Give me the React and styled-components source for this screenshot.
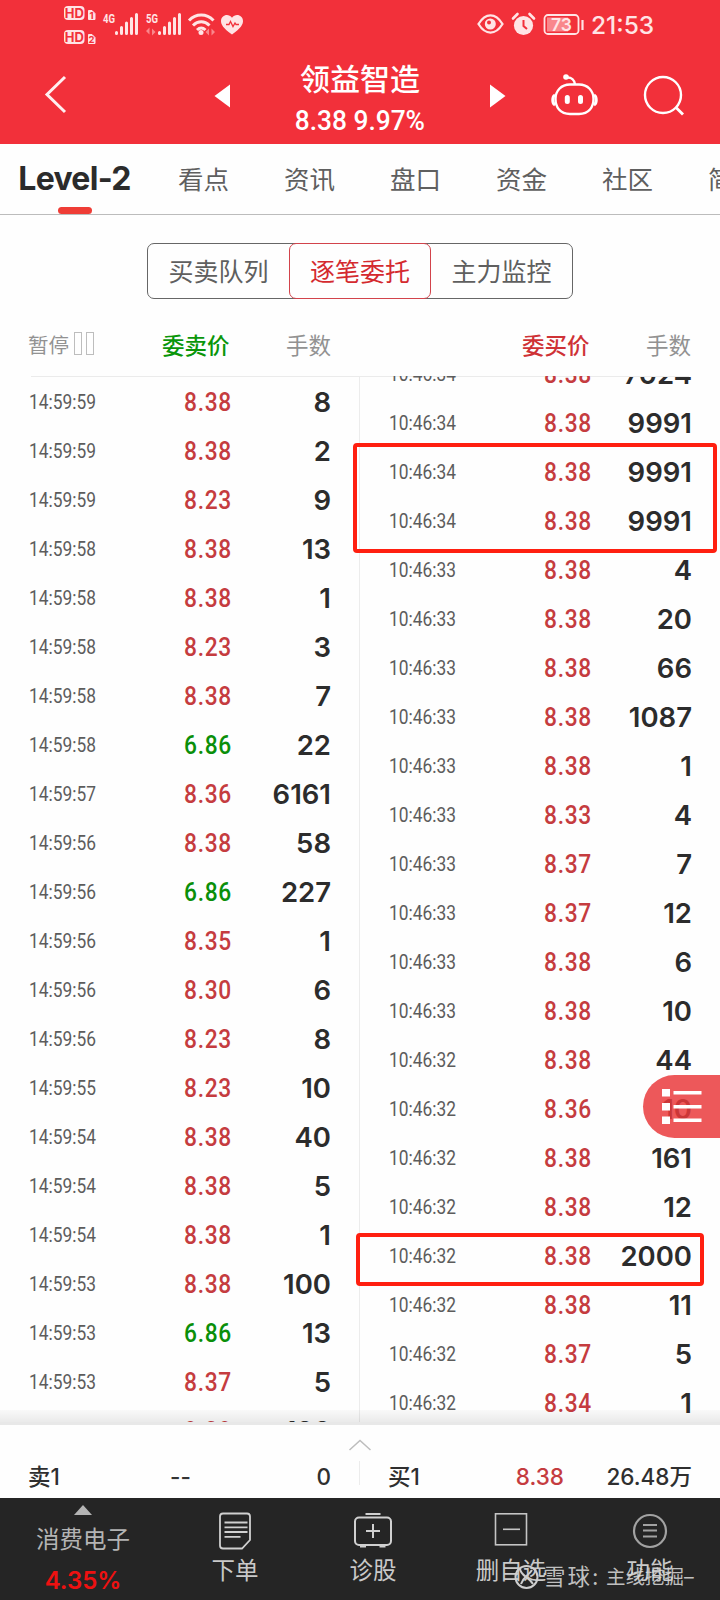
import React from 'react';
import styled, { createGlobalStyle } from 'styled-components';

const GlobalStyle = createGlobalStyle`
    * {
        box-sizing: border-box;
    }
    body {
        margin: 0;
        background: #fefefe;
        font-family: Inter, 'Noto Sans CJK SC', sans-serif;
        overflow: hidden;
    }
`;

const Page = styled.div`
    position: relative;
    width: 720px;
    height: 1600px;
    overflow: hidden;
    display: flex;
    flex-direction: column;
    background: #fefefe;
`;

const Header = styled.header`
    height: 144px;
    flex: none;
    background: #f2303a;
    color: #fff;
`;

const StatusBar = styled.div`
    height: 49px;
    display: flex;
    justify-content: space-between;
    padding: 0 65px 0 63px;
`;

const Clock = styled.span`
    font-size: 24.5px;
    font-weight: 500;
    line-height: 50px;
    color: #ffe4e5;
    margin-left: 7px;
    width: 64px;
    white-space: nowrap;
`;

const StatusGroup = styled.div`
    display: flex;
`;

const TitleBar = styled.div`
    height: 95px;
    display: flex;
    align-items: center;
    svg {
        flex: none;
    }
`;

const TitleText = styled.div`
    flex: none;
    width: 226px;
    margin: 0 17px 0 15px;
    display: flex;
    flex-direction: column;
    align-items: center;
`;

const StockName = styled.div`
    font-size: 30px;
    line-height: 40px;
    height: 42px;
    font-weight: 500;
    margin-top: 6px;
    white-space: nowrap;
`;

const StockQuote = styled.div`
    font-family: Roboto, sans-serif;
    font-size: 27px;
    line-height: 40px;
    font-weight: 500;
    white-space: nowrap;
    transform: scaleX(0.975);
`;

const Tabs = styled.nav`
    height: 71px;
    flex: none;
    display: flex;
    align-items: flex-start;
    border-bottom: 1px solid #bcbcbc;
    padding-left: 18px;
    overflow: hidden;
`;

const Tab = styled.div`
    flex: none;
    display: flex;
    flex-direction: column;
    align-items: center;
    width: ${({ $active }) => ($active ? '113px' : '50px')};
    margin-right: ${({ $active }) => ($active ? '47.5px' : '56px')};
    font-size: ${({ $active }) => ($active ? '32px' : '25.5px')};
    font-weight: ${({ $active }) => ($active ? 650 : 400)};
    letter-spacing: ${({ $active }) => ($active ? '-0.7px' : '0')};
    color: ${({ $active }) => ($active ? '#2b2b2b' : '#5f5f5f')};
    line-height: ${({ $active }) => ($active ? '70px' : '72px')};
    height: 70px;
    white-space: nowrap;
    &::after {
        content: '';
        display: ${({ $active }) => ($active ? 'block' : 'none')};
        flex: none;
        width: 34px;
        height: 7px;
        margin-top: -7px;
        border-radius: 4px;
        background: #ef3d36;
    }
`;

const Segments = styled.div`
    display: flex;
    flex: none;
    width: 426px;
    height: 56px;
    margin: 28px auto 0 147px;
    border: 1px solid #666;
    border-radius: 7px;
`;

const Segment = styled.div`
    flex: none;
    width: ${({ $active }) => ($active ? '142px' : '141px')};
    margin: -1px 0;
    border: 1px solid ${({ $active }) => ($active ? '#d2434b' : 'transparent')};
    border-radius: 7px;
    color: ${({ $active }) => ($active ? '#d42a2f' : '#5f5f5f')};
    font-size: 25px;
    line-height: 56px;
    text-align: center;
`;

const ColumnHeads = styled.div`
    display: flex;
    flex: none;
    height: 77px;
`;

const ColumnHead = styled.div`
    display: flex;
    align-items: center;
    width: 360px;
    padding: 12px 29px 0 28px;
    font-size: 22.5px;
    color: #929292;
`;

const PauseLabel = styled.div`
    display: flex;
    align-items: center;
    gap: 5px;
    width: 134px;
    font-size: 20.5px;
`;

const PauseBars = styled.span`
    display: flex;
    gap: 4px;
    i {
        width: 8px;
        height: 23px;
        border: 1px solid #bdbdbd;
    }
`;

const PriceHead = styled.div`
    flex: 1;
    font-size: 22.5px;
    font-weight: 500;
    color: ${({ $side }) => ($side === 'sell' ? '#0a960a' : '#cf3236')};
`;

const Lists = styled.main`
    position: relative;
    flex: none;
    display: flex;
    height: 1049px;
    overflow: hidden;
    &::before {
        content: '';
        position: absolute;
        top: 0;
        left: 31px;
        right: 31px;
        height: 1px;
        background: #ebebeb;
    }
    &::after {
        content: '';
        position: absolute;
        bottom: 0;
        left: 0;
        right: 0;
        height: 15px;
        background: linear-gradient(rgba(0, 0, 0, 0.02), rgba(0, 0, 0, 0.08) 12px, #e8e8e8 12px);
    }
`;

const List = styled.div`
    width: 360px;
    flex: none;
    padding-top: ${({ $side }) => ($side === 'sell' ? '1px' : '0')};
    border-right: ${({ $side }) => ($side === 'sell' ? '1px solid #ececec' : 'none')};
`;

const Row = styled.div`
    display: flex;
    align-items: center;
    height: 49px;
    padding: 0 ${({ $side }) => ($side === 'sell' ? '28px' : '28px')} 0 29px;
    &:first-child {
        margin-top: ${({ $side }) => ($side === 'sell' ? '0' : '-27px')};
    }
`;

const Time = styled.span`
    width: 101px;
    font-family: Roboto, sans-serif;
    font-size: 19.5px;
    line-height: 26px;
    margin-top: 2px;
    color: #5c5c5c;
    transform: scaleX(0.89);
    transform-origin: left;
`;

const Price = styled.span`
    width: 102px;
    text-align: right;
    font-family: Roboto, sans-serif;
    font-size: 25px;
    line-height: 30px;
    margin-top: 2px;
    letter-spacing: 0.8px;
    font-weight: 500;
    color: ${({ $down }) => ($down ? '#0a8f0a' : '#c53c3f')};
    transform: scaleX(0.91);
    transform-origin: right;
`;

const Amount = styled.span`
    flex: 1;
    text-align: right;
    font-size: 27.5px;
    font-weight: 570;
    color: #2c2c2c;
`;

const Marker = styled.div`
    position: absolute;
    left: ${({ $left }) => $left}px;
    top: ${({ $top }) => $top}px;
    width: ${({ $width }) => $width}px;
    height: ${({ $height }) => $height}px;
    border: 4px solid #ff1f10;
    border-radius: 4px;
`;

const FloatingMenu = styled.div`
    position: absolute;
    right: 0;
    top: 1075px;
    width: 77px;
    height: 63px;
    border-radius: 32px 0 0 32px;
    background: rgba(234, 56, 58, 0.84);
`;

const BestQuote = styled.section`
    flex: none;
    height: 73px;
    background: #fefefe;
    display: flex;
    flex-direction: column;
    align-items: center;
    padding-top: 14px;
`;

const QuoteRow = styled.div`
    width: 720px;
    display: flex;
    height: 40px;
    margin-top: 8px;
    font-size: 22.5px;
    font-weight: 530;
    line-height: 31px;
    color: #2f2f2f;
`;

const QuoteSide = styled.div`
    width: 360px;
    height: 24px;
    margin-top: 2px;
    padding: 0 28px;
    display: grid;
    grid-template-columns: ${({ $side }) => ($side === 'sell' ? '142px 60px 1fr' : '76px 100px 1fr')};
    border-right: ${({ $side }) => ($side === 'sell' ? '1px solid #ececec' : 'none')};
    span {
        white-space: nowrap;
    }
    span:first-child {
        font-weight: 500;
    }
    span:nth-child(2) {
        text-align: ${({ $side }) => ($side === 'sell' ? 'left' : 'right')};
        color: ${({ $side }) => ($side === 'sell' ? '#333' : '#c53c3f')};
    }
    span:nth-child(3) {
        text-align: right;
    }
`;

const BottomNav = styled.footer`
    position: relative;
    flex: none;
    height: 102px;
    display: flex;
    background: #252525;
    color: #c9c9c9;
`;

const NavItem = styled.div`
    width: ${({ $width }) => $width || 138}px;
    display: flex;
    flex-direction: column;
    align-items: center;
    padding-top: 12px;
`;

const NavLabel = styled.div`
    font-size: 23.5px;
    line-height: 34px;
    margin-top: 2px;
    white-space: nowrap;
`;

const Sector = styled.div`
    width: 166px;
    display: flex;
    flex-direction: column;
    align-items: center;
    padding-top: 7px;
    font-size: 23.5px;
    line-height: 34px;
    color: #b4b4b4;
`;

const SectorName = styled.div`
    margin-top: 8px;
    line-height: 34px;
`;

const SectorChange = styled.div`
    color: #ee1111;
    font-size: 24px;
    font-weight: 570;
    margin-top: 7px;
`;

const Watermark = styled.div`
    position: absolute;
    left: 514px;
    top: 64px;
    display: flex;
    align-items: center;
    font-size: 22.5px;
    line-height: 30px;
    color: rgba(220, 220, 220, 0.85);
    white-space: nowrap;
    span:nth-of-type(1) {
        width: 67px;
        padding-left: 4px;
        letter-spacing: 2px;
    }
    span:nth-of-type(2) {
        font-size: 19.5px;
    }
`;

const sellRows = [
    ['14:59:59', '8.38', '8'],
    ['14:59:59', '8.38', '2'],
    ['14:59:59', '8.23', '9'],
    ['14:59:58', '8.38', '13'],
    ['14:59:58', '8.38', '1'],
    ['14:59:58', '8.23', '3'],
    ['14:59:58', '8.38', '7'],
    ['14:59:58', '6.86', '22'],
    ['14:59:57', '8.36', '6161'],
    ['14:59:56', '8.38', '58'],
    ['14:59:56', '6.86', '227'],
    ['14:59:56', '8.35', '1'],
    ['14:59:56', '8.30', '6'],
    ['14:59:56', '8.23', '8'],
    ['14:59:55', '8.23', '10'],
    ['14:59:54', '8.38', '40'],
    ['14:59:54', '8.38', '5'],
    ['14:59:54', '8.38', '1'],
    ['14:59:53', '8.38', '100'],
    ['14:59:53', '6.86', '13'],
    ['14:59:53', '8.37', '5'],
    ['14:59:53', '8.38', '128'],
];

const buyRows = [
    ['10:46:34', '8.38', '7024'],
    ['10:46:34', '8.38', '9991'],
    ['10:46:34', '8.38', '9991'],
    ['10:46:34', '8.38', '9991'],
    ['10:46:33', '8.38', '4'],
    ['10:46:33', '8.38', '20'],
    ['10:46:33', '8.38', '66'],
    ['10:46:33', '8.38', '1087'],
    ['10:46:33', '8.38', '1'],
    ['10:46:33', '8.33', '4'],
    ['10:46:33', '8.37', '7'],
    ['10:46:33', '8.37', '12'],
    ['10:46:33', '8.38', '6'],
    ['10:46:33', '8.38', '10'],
    ['10:46:32', '8.38', '44'],
    ['10:46:32', '8.36', '10'],
    ['10:46:32', '8.38', '161'],
    ['10:46:32', '8.38', '12'],
    ['10:46:32', '8.38', '2000'],
    ['10:46:32', '8.38', '11'],
    ['10:46:32', '8.37', '5'],
    ['10:46:32', '8.34', '1'],
];

const tabs = ['Level-2', '看点', '资讯', '盘口', '资金', '社区', '简况'];

const StatusLeft = () => (
    <svg width="182" height="49" fill="#ffe4e5">
        {[6, 30].map((y, i) => (
            <g key={y}>
                <rect x="1" y={y} width="20.5" height="14" rx="4" />
                <text x="11.3" y={y + 11.8} fontSize="13" fontWeight="700" textAnchor="middle" fill="#f2303a">HD</text>
                <path d={`M25.500 ${y + 4.5}h3.500l3 3v6h-6.500z`} stroke="#ffe4e5" strokeLinejoin="round" />
                <text x="28.5" y={y + 12.8} fontSize="9.5" fontWeight="700" textAnchor="middle" fill="#f2303a">{i + 1}</text>
            </g>
        ))}
        <text x="40" y="22.500" fontFamily="Roboto" fontSize="13" fontWeight="700" textLength="12" lengthAdjust="spacingAndGlyphs">4G</text>
        <text x="83" y="22.500" fontFamily="Roboto" fontSize="13" fontWeight="700" textLength="12" lengthAdjust="spacingAndGlyphs">5G</text>
        {[52, 95].map((x) => (
            <path key={x} d={`M${x + 1.5} 32.500v1M${x + 6.5} 27.5v6M${x + 11.5} 23v10.5M${x + 16.5} 18.5v15M${x + 21.5} 14.5v19`} stroke="#ffe4e5" strokeWidth="3" strokeLinecap="round" />
        ))}
        <g fill="#f9878c">
            <path d="M83 31l3.5-3.500v7zM92.500 32l-3.500-3.500v7z" />
            <path d="M142.500 32l3.500-3.500v7zM152 32l-3.500-3.500v7z" />
        </g>
        <g fill="none" stroke="#ffe4e5" strokeWidth="3">
            <path d="M126 20.500c7-7.300 17.500-7.300 24.500 0M130 25.500c5-5 11.500-5 16.500 0M134 30c3-2.800 5.500-2.800 8.500 0" />
        </g>
        <circle cx="138" cy="32.500" r="2.500" />
        <path d="M169 34.500C160 28 158 24.500 158 21c0-6 7.500-8.500 11-3.200 3.500-5.300 11-2.800 11 3.200 0 3.500-2 7-11 13.500z" />
        <path d="M163 24.500h3l1.500-3 2.500 5 2-3.500 1 1.500h3" fill="none" stroke="#f2303a" strokeWidth="1.300" />
    </svg>
);

const StatusRight = () => (
    <svg width="107" height="49" fill="none" stroke="#ffe4e5" strokeWidth="2">
        <path d="M1.500 24c7-11.500 17-11.500 24 0-7 11.500-17 11.500-24 0z" strokeWidth="2.300" />
        <circle cx="13.300" cy="24" r="5.500" fill="#ffe4e5" stroke="none" />
        <circle cx="12" cy="22.500" r="2" fill="#f2303a" stroke="none" />
        <circle cx="46.500" cy="25.500" r="9.600" fill="#ffe4e5" stroke="none" />
        <path d="M36 18.500l4.500-4.500M57 18.500L52.500 14" strokeWidth="2.600" strokeLinecap="round" />
        <path d="M46.500 20v6l3.500 3" stroke="#f2303a" />
        <rect x="67.500" y="15" width="34" height="19" rx="3.500" strokeWidth="1.800" />
        <rect x="70" y="17.500" width="21" height="14" fill="#f9878c" stroke="none" />
        <path d="M105.500 20v10" strokeWidth="2.200" />
        <text x="84.500" y="30.800" fontSize="17.500" fontWeight="600" fill="#ffe4e5" stroke="none" textAnchor="middle">73</text>
    </svg>
);

const BackIcon = () => (
    <svg width="208" height="95" fill="none" stroke="#ffeff0" strokeWidth="3">
        <path d="M65 28L47 45.500 65 63" />
    </svg>
);

const Triangle = ({ flip }) => (
    <svg width="24" height="95" fill="#fff">
        <path d={flip ? 'M0 35.500l15.500 11.500L0 58.500z' : 'M22 35.500L6.500 47 22 58.500z'} />
    </svg>
);

const HeaderActions = () => (
    <svg width="206" height="95" fill="none" stroke="#fff" strokeWidth="2.400">
        <path d="M56 35.500h9c9 0 14.500 6.500 14.500 14.500S75 65 65 65h-9c-10 0-14.500-7-14.500-15S47 35.500 56 35.500z" />
        <path d="M41 46c-3 1.500-3 8.500 0 10M80 46c3 1.500 3 8.500 0 10" strokeWidth="3" />
        <path d="M52.500 28.500c5-.5 8 2.500 8.500 7" />
        <circle cx="52" cy="28" r="2.800" fill="#fff" stroke="none" />
        <path d="M53.300 48.500v4M66.500 48.500v4" strokeWidth="5" strokeLinecap="round" />
        <circle cx="149" cy="46" r="18" />
        <path d="M161.500 58l7.500 7.500" strokeWidth="2.800" />
    </svg>
);

const OrderIcon = () => (
    <svg width="36" height="42" fill="none" stroke="#d0d0d0" strokeWidth="1.800">
        <path d="M6 3.500h24q3 0 3 3v23.500l-8 8.500H6q-3 0-3-3v-29q0-3 3-3z" />
        <path d="M7.500 12.500h23M7.500 17.300h23M7.500 22h23M7.500 26.800h16" />
    </svg>
);

const DiagnoseIcon = () => (
    <svg width="40" height="42" fill="none" stroke="#d0d0d0" strokeWidth="2">
        <rect x="2" y="7.500" width="36" height="27.500" rx="4" />
        <path d="M12.500 4h15M7 36.500h6M26.500 36.500h6M20 14v14M13 21h14" />
    </svg>
);

const RemoveIcon = () => (
    <svg width="36" height="42" fill="none" stroke="#c4c4c4" strokeWidth="1.600">
        <rect x="2.500" y="3.800" width="31" height="31" />
        <path d="M10 19.300h17" />
    </svg>
);

const FunctionIcon = () => (
    <svg width="36" height="42" fill="none" stroke="#a2a2a2" strokeWidth="2.200">
        <circle cx="18" cy="21" r="16" />
        <path d="M11 15h14M11 20.500h14M11 26.500h14" />
    </svg>
);

const OrderList = ({ rows, side }) => (
    <List $side={side}>
        {rows.map(([time, price, amount], i) => (
            <Row key={i} $side={side}>
                <Time>{time}</Time>
                <Price $down={price === '6.86'}>{price}</Price>
                <Amount>{amount}</Amount>
            </Row>
        ))}
    </List>
);

const App = () => (
    <>
        <GlobalStyle />
        <Page>
            <Header>
                <StatusBar>
                    <StatusLeft />
                    <StatusGroup>
                        <StatusRight />
                        <Clock>21:53</Clock>
                    </StatusGroup>
                </StatusBar>
                <TitleBar>
                    <BackIcon />
                    <Triangle />
                    <TitleText>
                        <StockName>领益智造</StockName>
                        <StockQuote>8.38 9.97%</StockQuote>
                    </TitleText>
                    <Triangle flip />
                    <HeaderActions />
                </TitleBar>
            </Header>

            <Tabs>
                {tabs.map((name, i) => (
                    <Tab key={name} $active={i === 0}>{name}</Tab>
                ))}
            </Tabs>

            <Segments>
                <Segment>买卖队列</Segment>
                <Segment $active>逐笔委托</Segment>
                <Segment>主力监控</Segment>
            </Segments>

            <ColumnHeads>
                <ColumnHead>
                    <PauseLabel>
                        暂停
                        <PauseBars><i /><i /></PauseBars>
                    </PauseLabel>
                    <PriceHead $side="sell">委卖价</PriceHead>
                    <span>手数</span>
                </ColumnHead>
                <ColumnHead>
                    <PauseLabel />
                    <PriceHead $side="buy">委买价</PriceHead>
                    <span>手数</span>
                </ColumnHead>
            </ColumnHeads>

            <Lists>
                <OrderList rows={sellRows} side="sell" />
                <OrderList rows={buyRows} side="buy" />
            </Lists>

            <BestQuote>
                <svg width="24" height="12" fill="none" stroke="#bdbdbd" strokeWidth="1.500">
                    <path d="M1.500 11L12 1.500 22.500 11" />
                </svg>
                <QuoteRow>
                    <QuoteSide $side="sell">
                        <span>卖1</span>
                        <span>--</span>
                        <span>0</span>
                    </QuoteSide>
                    <QuoteSide $side="buy">
                        <span>买1</span>
                        <span>8.38</span>
                        <span>26.48万</span>
                    </QuoteSide>
                </QuoteRow>
            </BestQuote>

            <BottomNav>
                <Sector>
                    <svg width="18" height="10" fill="#b4b4b4">
                        <path d="M9 0l9 10H0z" />
                    </svg>
                    <SectorName>消费电子</SectorName>
                    <SectorChange>4.35%</SectorChange>
                </Sector>
                <NavItem>
                    <OrderIcon />
                    <NavLabel>下单</NavLabel>
                </NavItem>
                <NavItem>
                    <DiagnoseIcon />
                    <NavLabel>诊股</NavLabel>
                </NavItem>
                <NavItem>
                    <RemoveIcon />
                    <NavLabel>删自选</NavLabel>
                </NavItem>
                <NavItem $width={140}>
                    <FunctionIcon />
                    <NavLabel>功能</NavLabel>
                </NavItem>
                <Watermark>
                    <svg width="25" height="26" fill="none" stroke="#cfcfcf" strokeWidth="2">
                        <circle cx="12.500" cy="13" r="11" />
                        <path d="M6 5c1 7 8 7 13 15M18 6c-3 5-8 6-11 14" />
                    </svg>
                    <span>雪球:</span>
                    <span>主线挖掘–</span>
                </Watermark>
            </BottomNav>

            <Marker $left={353} $top={443} $width={364} $height={110} />
            <Marker $left={356} $top={1233} $width={348} $height={53} />
            <FloatingMenu>
                <svg width="77" height="63" fill="#fff">
                    <path d="M19 14h8v7.500h-8zM19 28h8v7.500h-8zM19 41.500h8v7.500h-8z" />
                    <path d="M30.500 16h28v3.500h-28zM30.500 30h28v3.500h-28zM30.500 43.500h28v3.500h-28z" />
                </svg>
            </FloatingMenu>
        </Page>
    </>
);

export default App;
